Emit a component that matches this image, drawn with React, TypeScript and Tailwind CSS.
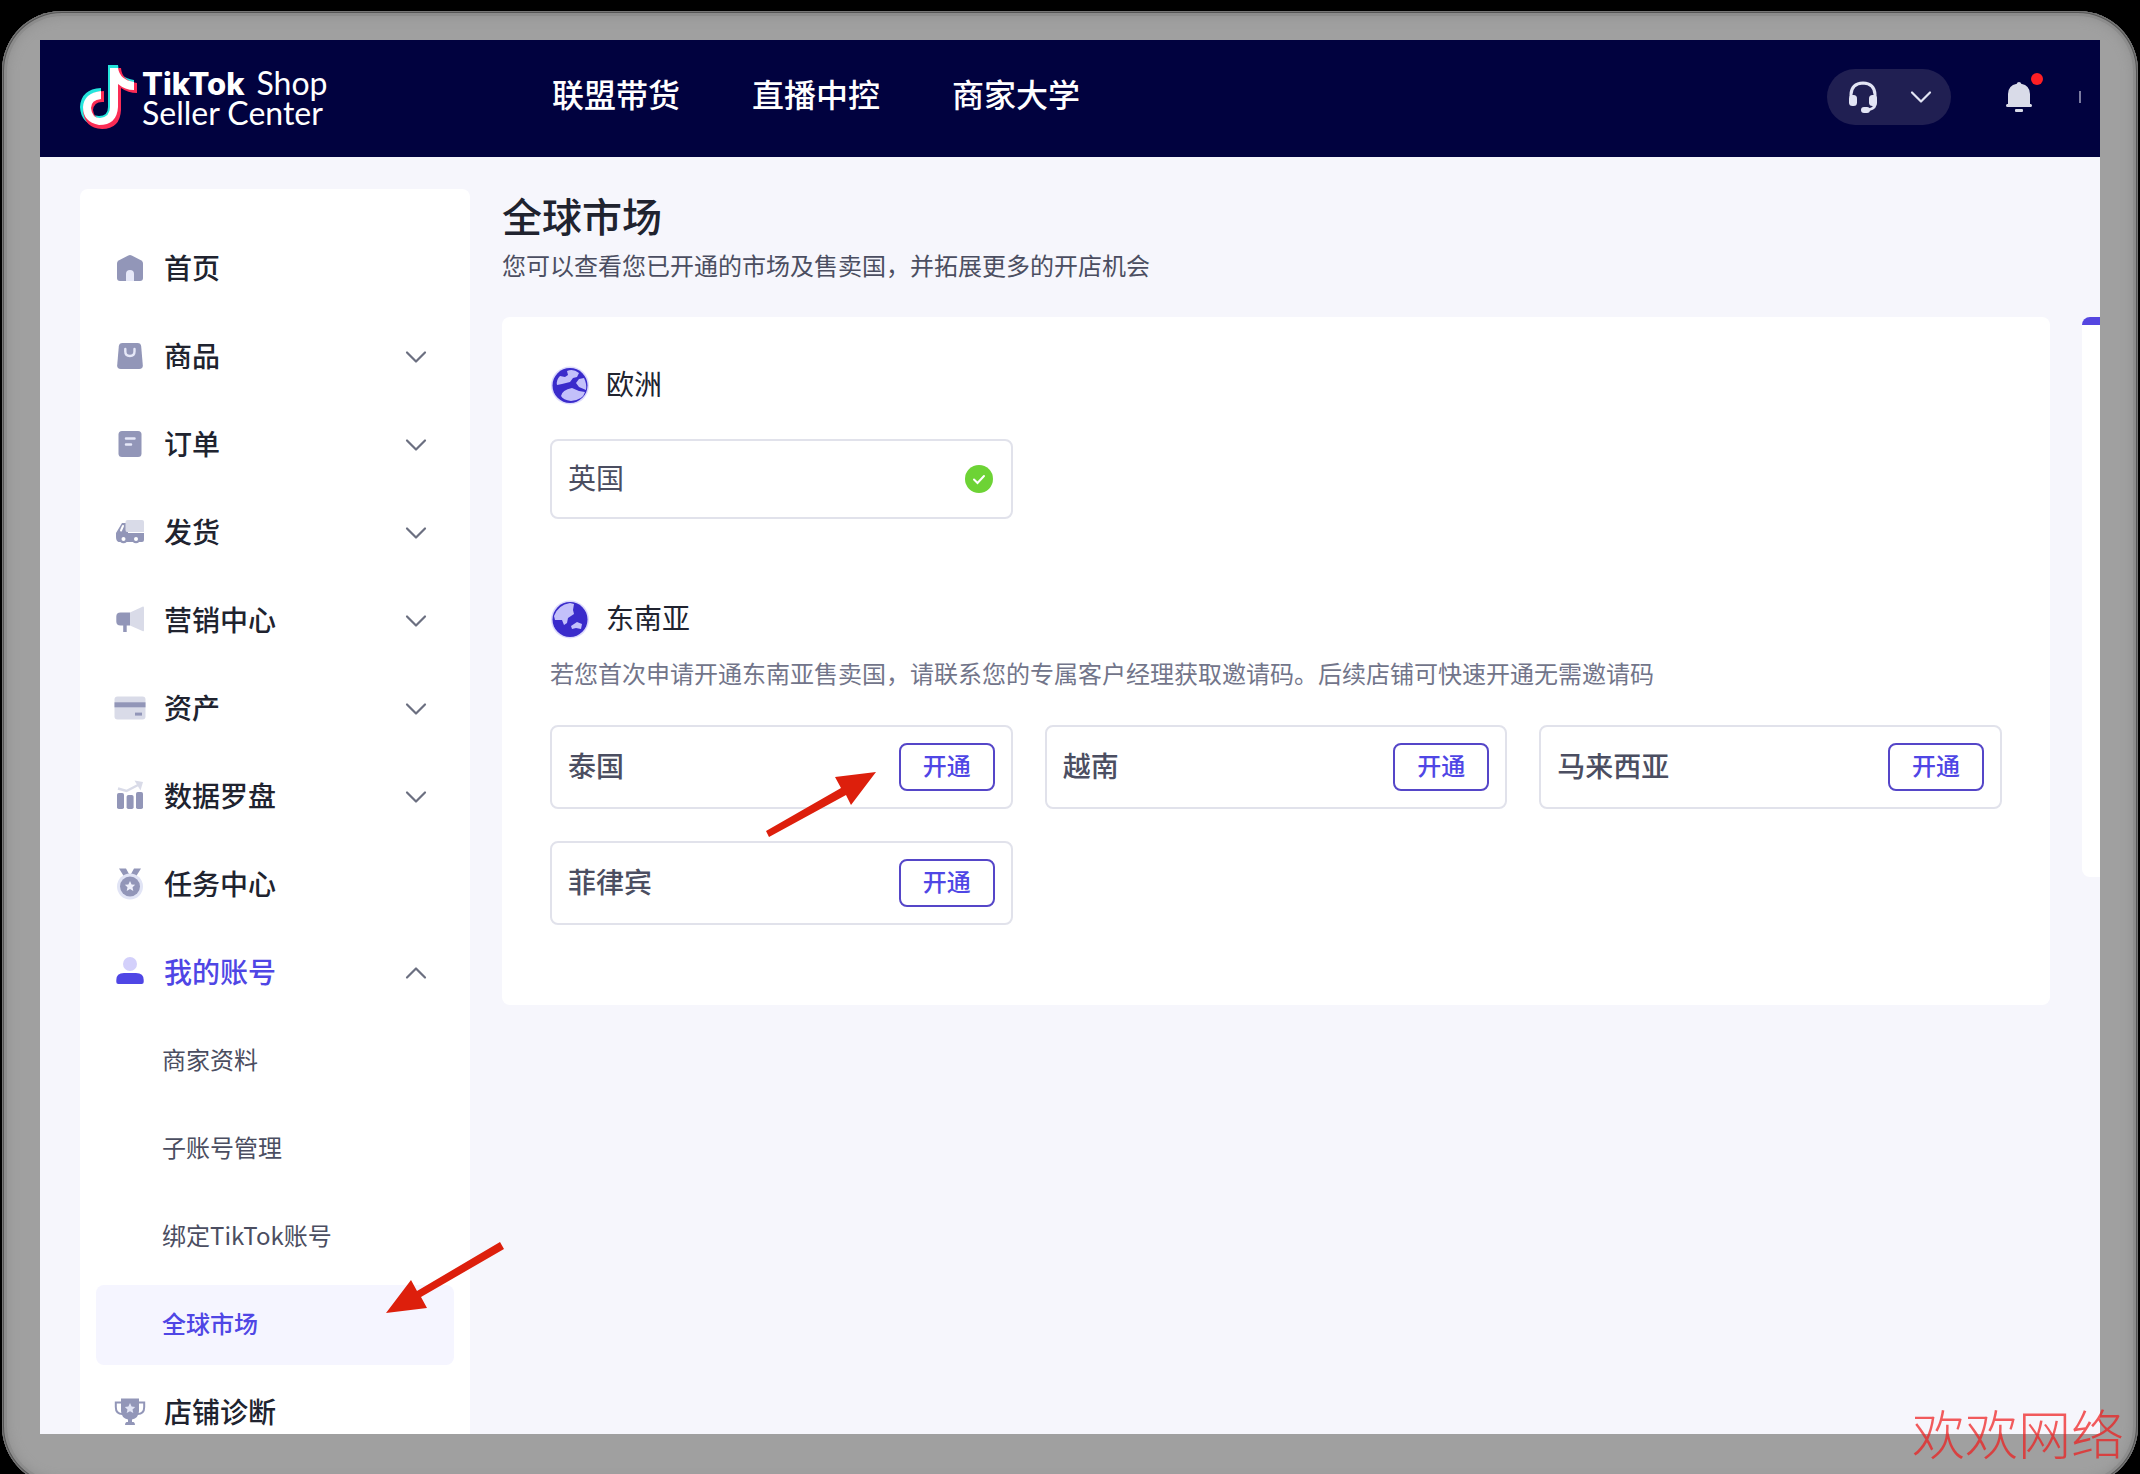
import { ReactNode, useState } from 'react';

const CHEVRON_DOWN = 'M2 3L11 12L20 3';
const CHEVRON_UP = 'M2 12L11 3L20 12';

function Chevron({ open = false, className = 'text-[#6b6f80]' }: { open?: boolean; className?: string }) {
  return (
    <svg className={`h-4 w-[22px] ${className}`} viewBox="0 0 22 15" fill="none" stroke="currentColor" strokeWidth={2.2} strokeLinecap="round" strokeLinejoin="round">
      <path d={open ? CHEVRON_UP : CHEVRON_DOWN} />
    </svg>
  );
}

// All menu icons share a 32x32 box: dark tone #9296b8, light tone #d9dbe8
function MenuIcon({ children }: { children: ReactNode }) {
  return (
    <svg className="h-8 w-8 shrink-0" viewBox="0 0 32 32" fill="#9296b8">
      {children}
    </svg>
  );
}

const STAR = 'M0 -5.4L1.6 -1.9L5.2 -1.6L2.5 0.9L3.3 4.6L0 2.7L-3.3 4.6L-2.5 0.9L-5.2 -1.6L-1.6 -1.9Z';

const icons: Record<string, ReactNode> = {
  home: (
    <>
      <path d="M3 11.2Q3 9.4 4.6 8.4L14.3 3.4Q16 2.6 17.7 3.4L27.4 8.4Q29 9.4 29 11.2V26Q29 29 26 29H6Q3 29 3 26Z" />
      <path d="M12 29V22Q12 18 16 18Q20 18 20 22V29Z" fill="#e6e8f8" />
    </>
  ),
  goods: (
    <>
      <path d="M4.8 6.4Q5.1 3 8.5 3H23.5Q26.9 3 27.2 6.4L28.8 25.2Q29 29 25.2 29H6.8Q3 29 3.2 25.2Z" />
      <path d="M11.3 9V11.6Q11.3 16 15.9 16Q20.5 16 20.5 11.6V9" fill="none" stroke="#e6e8f8" strokeWidth={2.4} strokeLinecap="round" />
    </>
  ),
  orders: (
    <>
      <rect x="4.5" y="3" width="23" height="26" rx="3.5" />
      <path d="M12 10.5H20.5M12 16.5H17" stroke="#e6e8f8" strokeWidth={2.5} strokeLinecap="round" />
    </>
  ),
  shipping: (
    <>
      <path d="M8 7H14V17H30V24Q30 26 28 26H4.500Q2 25 2 21V17Z" />
      <path d="M11.5 6Q11.500 4 13.500 4H28Q30 4 30 6V16H13Q11.500 16 11.500 14Z" fill="#d9dbe8" />
      <path d="M9 10L7 14.500" stroke="#fff" strokeWidth={2} strokeLinecap="round" />
      <circle cx="9.5" cy="23.5" r="3.8" />
      <circle cx="22" cy="23.5" r="3.8" />
      <circle cx="9.5" cy="23" r="2" fill="#fff" />
      <circle cx="22" cy="23" r="2" fill="#fff" />
    </>
  ),
  marketing: (
    <>
      <path d="M16 8.5L29 2.5Q30 2.5 30 3.5V26.5Q30 27.5 29 27.2L16 21.5Z" fill="#d9dbe8" />
      <path d="M16 8.5H6.5Q2.3 8.5 2.3 12.5V17.5Q2.3 21.5 6.5 21.5H9.2V28H12.7V21.5H16Z" />
    </>
  ),
  assets: (
    <>
      <rect x="0.5" y="4.5" width="31" height="23" rx="3" fill="#d9dbe8" />
      <rect x="0.5" y="10.3" width="31" height="5" />
      <rect x="21" y="20.6" width="7" height="3" />
    </>
  ),
  data: (
    <>
      <rect x="3" y="13" width="7" height="16" rx="1.8" />
      <rect x="12.6" y="15" width="7" height="14" rx="1.8" />
      <rect x="22" y="12" width="7" height="17" rx="1.8" />
      <path d="M4 8.5L12.5 11L25 4.5" fill="none" stroke="#d9dbe8" strokeWidth={2.5} />
      <path d="M20.5 0.5L29 2L26.5 10.5Z" fill="#d9dbe8" />
    </>
  ),
  tasks: (
    <>
      <path d="M5 0.5H12L15 6L10 8.5ZM27 0.5H20L17 6L22 8.5Z" />
      <circle cx="16" cy="18.5" r="13" fill="#e1e4f5" />
      <circle cx="16" cy="18.5" r="10" />
      <path transform="translate(16 18.3)" d={STAR} fill="#eef0fb" />
    </>
  ),
  account: (
    <>
      <circle cx="16" cy="8" r="7" fill="#d3d0fb" />
      <path d="M2.3 26V24Q2.3 17 10 17H22Q29.7 17 29.7 24V26Q29.7 28 27.7 28H4.3Q2.3 28 2.3 26Z" fill="#4f46e5" />
    </>
  ),
  diagnosis: (
    <>
      <path d="M7 2.5H25V15Q24.5 22.5 18 23.5V26H19.5Q21 26.5 21 29H11Q11 26.5 12.5 26H14V23.5Q7.5 22.5 7 15Z" />
      <path d="M7.5 6.5H1.8V11Q1.8 18 8.5 18M24.5 6.5H30.2V11Q30.2 18 23.5 18" fill="none" stroke="#9296b8" strokeWidth={2} />
      <path transform="translate(16 12.5)" d={STAR} fill="#e1e4f5" />
    </>
  ),
};

type MenuItem = { icon: string; label: string; children?: string[]; expandable?: boolean };

const menu: MenuItem[] = [
  { icon: 'home', label: '首页' },
  { icon: 'goods', label: '商品', expandable: true },
  { icon: 'orders', label: '订单', expandable: true },
  { icon: 'shipping', label: '发货', expandable: true },
  { icon: 'marketing', label: '营销中心', expandable: true },
  { icon: 'assets', label: '资产', expandable: true },
  { icon: 'data', label: '数据罗盘', expandable: true },
  { icon: 'tasks', label: '任务中心' },
  { icon: 'account', label: '我的账号', expandable: true, children: ['商家资料', '子账号管理', '绑定TikTok账号', '全球市场'] },
  { icon: 'diagnosis', label: '店铺诊断' },
];

const navLinks = ['联盟带货', '直播中控', '商家大学'];
const countries = ['泰国', '越南', '马来西亚', '菲律宾'];

const NOTE = 'M28 0H38Q39 13 54 15V25Q45 25 38 20V42Q37 61 19 61Q1 60 0 42Q1 24 21 23V34Q11 33 10 42Q11 51 19 51Q28 51 28 42Z';

function Logo() {
  return (
    <a href="#" className="flex items-center gap-1 text-white">
      <svg className="h-16 w-[58px]" viewBox="0 0 58 64">
        <path d={NOTE} fill="#25e5dc" />
        <path d={NOTE} fill="#fb2c55" transform="translate(3 3)" />
        <path d="M30 3H38Q40 15 54 17V25Q45 25 38 19V42Q37 60 19 60Q3 57 3 42Q4 28 21 26V34Q11 35 11 43Q12 53 20 53Q30 52 30 42Z" fill="#fff" />
      </svg>
      <div className="font-['Lato','Noto_Sans_CJK_SC',sans-serif] text-[32px] leading-[29px]">
        <div className="flex items-baseline gap-3">
          <span className="font-['Inter',sans-serif] text-[31px] font-extrabold">TikTok</span>
          <span>Shop</span>
        </div>
        <div>Seller Center</div>
      </div>
    </a>
  );
}

function Header() {
  return (
    <header className="flex h-[117px] shrink-0 items-center bg-[#01023f] pb-[3px] pl-10">
      <div className="w-[472px] shrink-0">
        <Logo />
      </div>
      <nav className="flex gap-[72px] pb-2">
        {navLinks.map((link) => (
          <a key={link} href="#" className="text-[32px] leading-10 font-medium whitespace-nowrap text-white">
            {link}
          </a>
        ))}
      </nav>
      <div className="ml-auto flex items-center pr-[19px]">
        <button aria-label="客服" className="flex h-14 w-[124px] items-center justify-between rounded-full bg-[#201f52] pr-[19px] pl-5">
          <svg className="h-8 w-8" viewBox="0 0 32 32" fill="#e2e4f4">
            <path d="M4 16V13.5Q4.5 2.5 16 2Q27.5 2.5 28 13.5V24Q27 28.5 19 29" fill="none" stroke="#e2e4f4" strokeWidth={3} />
            <rect x="2" y="14" width="8" height="11" rx="3.5" />
            <rect x="22" y="14" width="8" height="11" rx="3.5" />
            <rect x="14" y="26" width="9" height="6" rx="3" />
          </svg>
          <Chevron className="text-[#e2e4f4]" />
        </button>
        <button aria-label="通知" className="relative ml-[54px] h-8 w-7">
          <svg className="h-8 w-7" viewBox="0 0 28 32" fill="#d9dbe8">
            <path d="M14 1Q16 1 16.2 2.7Q25 4.5 25 13V23H26Q27 23.5 27 24.5Q27 26 25.5 26H2.5Q1 26 1 24.5Q1 23.5 2 23H3V13Q3 4.5 11.8 2.700Q12 1 14 1Z" />
            <rect x="10" y="28" width="8" height="3" rx="1" />
          </svg>
          <span className="absolute -top-2 -right-[10px] h-3 w-3 rounded-full bg-[#ff1f24]" />
        </button>
        <span className="ml-[46px] h-3 w-[2px] bg-[#7b7ca0]" />
      </div>
    </header>
  );
}

function Sidebar() {
  const [active, setActive] = useState('全球市场');

  return (
    <aside className="w-[390px] shrink-0 rounded-t-lg bg-white px-4 pt-10">
      <ul className="flex flex-col gap-2">
        {menu.map((item) => (
          <li key={item.label} className="flex flex-col gap-2">
            <button className="flex h-20 w-full items-center gap-[18px] pr-[27px] pb-[3px] pl-[18px]">
              <MenuIcon>{icons[item.icon]}</MenuIcon>
              <span className={`flex-1 pb-[2px] text-left text-[28px] leading-10 font-medium ${item.children ? 'text-[#4f46e5]' : 'text-[#20232f]'}`}>
                {item.label}
              </span>
              {item.expandable && (
                <span className="pt-[3px]">
                  <Chevron open={!!item.children} />
                </span>
              )}
            </button>
            {item.children?.map((child) => (
              <a
                key={child}
                href="#"
                onClick={() => setActive(child)}
                className={`flex h-20 items-center rounded-lg pb-1 pl-[66px] text-[24px] ${
                  child === active ? 'bg-[#f5f5ff] font-medium text-[#4f46e5]' : 'text-[#4b4e61]'
                }`}
              >
                {child}
              </a>
            ))}
          </li>
        ))}
      </ul>
    </aside>
  );
}

function Globe({ children }: { children: ReactNode }) {
  return (
    <svg className="h-10 w-10" viewBox="0 0 40 40">
      <circle cx="20" cy="20.5" r="19" fill="#dcdafc" />
      <circle cx="20" cy="20.5" r="17.5" fill="#3a2bcb" />
      {children}
    </svg>
  );
}

function CountryCard({ name }: { name: string }) {
  return (
    <div className="flex h-[84px] items-center justify-between rounded-lg border-2 border-[#e1e2eb] px-4">
      <span className="pb-1 text-[28px] leading-10 font-medium text-[#4b4e61]">{name}</span>
      <button className="h-12 w-24 rounded-lg border-2 border-[#5546c8] pb-1 text-[24px] leading-8 font-medium text-[#4f46e5]">
        开通
      </button>
    </div>
  );
}

function Market() {
  return (
    <main className="min-w-0 flex-1">
      <h1 className="pb-1 text-[40px] leading-[52px] font-medium text-[#20232f]">全球市场</h1>
      <p className="text-[24px] leading-10 text-[#4b4e61]">您可以查看您已开通的市场及售卖国，并拓展更多的开店机会</p>

      <div className="mt-8 rounded-lg bg-white px-12 pt-12 pb-20">
        <section>
          <h2 className="flex items-center gap-4 text-[28px] leading-9 text-[#20232f]">
            <Globe>
              <path d="M11 31Q12 25 22 23L29 26L35 27Q33 35 21 36Q13 35 11 31Z" fill="#c3c0fa" />
              <path d="M29 14L34 13Q37 19 36 25L29 22L26 18Z" fill="#c3c0fa" />
              <path d="M17 6Q23 3 29 8L27 12L23 13L20 17L12 19L7 20Q6 15 10 11L15 12L18 10Z" fill="#c3c0fa" />
            </Globe>
            <span className="pb-1">欧洲</span>
          </h2>
          <div className="mt-[34px] grid grid-cols-3 gap-8">
            <div className="flex h-20 items-center justify-between rounded-lg border-2 border-[#e1e2eb] pr-[18px] pl-4">
              <span className="pb-1 text-[28px] leading-10 text-[#4b4e61]">英国</span>
              <svg className="h-7 w-7" viewBox="0 0 28 28">
                <circle cx="14" cy="14" r="14" fill="#6dd335" />
                <path d="M9 14.5L12.5 18L19 11" fill="none" stroke="#fff" strokeWidth={2} strokeLinecap="round" />
              </svg>
            </div>
          </div>
        </section>

        <section className="mt-20">
          <h2 className="flex items-center gap-4 text-[28px] leading-9 text-[#20232f]">
            <Globe>
              <path d="M4 17Q8 6 20 4L24 5L23 11L24 15L18 19L17 24L14 26L12 21L5 21Z" fill="#c3c0fa" />
              <path d="M21 27L27 23L32 25L31 30L26 29L22 30Z" fill="#c3c0fa" />
            </Globe>
            <span className="pb-1">东南亚</span>
          </h2>
          <p className="mt-[14px] text-[24px] leading-10 text-[#72758a]">
            若您首次申请开通东南亚售卖国，请联系您的专属客户经理获取邀请码。后续店铺可快速开通无需邀请码
          </p>
          <div className="mt-8 grid grid-cols-3 gap-8">
            {countries.map((name) => (
              <CountryCard key={name} name={name} />
            ))}
          </div>
        </section>
      </div>
    </main>
  );
}

export default function App() {
  return (
    <div className="relative flex h-screen flex-col overflow-hidden bg-black px-[2px] pt-[11px] font-['Noto_Sans_CJK_SC',sans-serif]">
      <div className="-mb-3 flex min-h-0 flex-1 flex-col rounded-[60px] bg-[#a0a0a0] px-[38px] pt-[29px] pb-[52px] shadow-[inset_0_0_0_1px_#777,inset_0_0_0_2px_#555,inset_0_0_0_5px_#8c8c8c,inset_0_0_12px_5px_#8f8f8f]">
        <div className="flex min-h-0 flex-1 flex-col overflow-hidden bg-[#f6f6fc]">
          <Header />
          <div className="flex min-h-0 flex-1 gap-8 overflow-hidden pt-8 pl-10">
            <Sidebar />
            <Market />
            <div className="mt-32 h-[560px] w-[18px] shrink-0 overflow-hidden rounded-l-lg bg-white">
              <div className="h-2 bg-[#5546e0]" />
            </div>
          </div>
        </div>
      </div>

      {/* annotation arrows */}
      <svg className="pointer-events-none absolute top-[772px] left-[766px] h-[66px] w-[111px]" viewBox="0 0 111 66" fill="#dd1f0c">
        <path d="M110 0L69 5L75 16L0 59L3 65L80 23L85 33Z" />
      </svg>
      <svg className="pointer-events-none absolute top-[1242px] left-[386px] h-[72px] w-[119px]" viewBox="0 0 119 72" fill="#dd1f0c">
        <path d="M0 71L25 38L31 49L114 0L118 7L35 55L41 66Z" />
      </svg>
      <span className="absolute right-4 bottom-1 text-[53px] leading-[76px] font-light whitespace-nowrap text-[#f01818]/70">欢欢网络</span>
    </div>
  );
}
